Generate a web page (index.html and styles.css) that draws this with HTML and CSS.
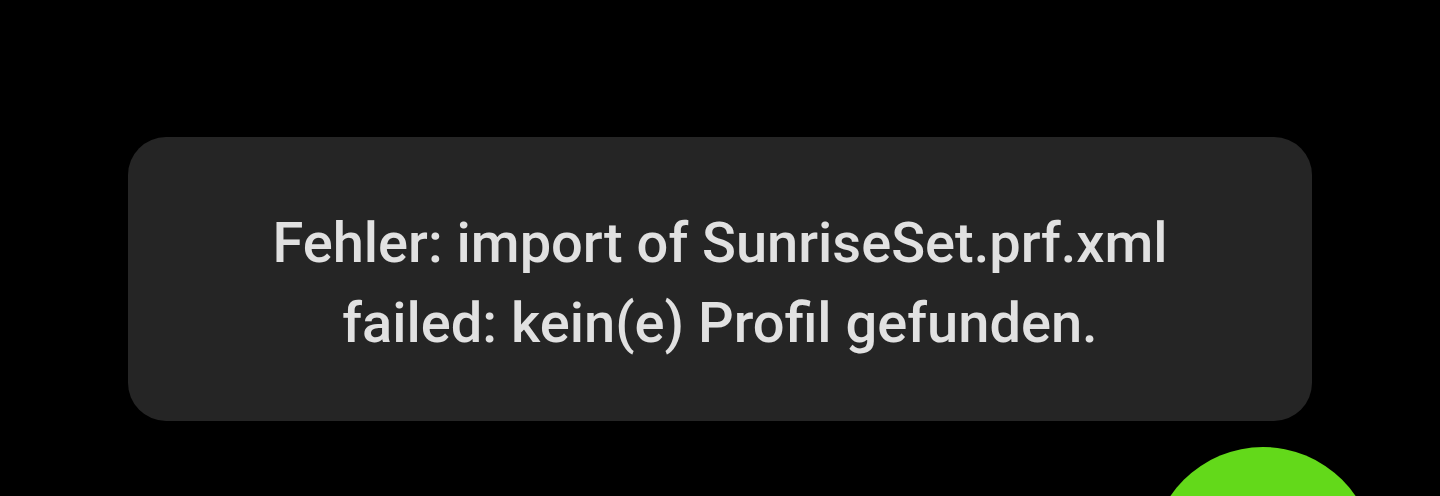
FILE: index.html
```html
<!DOCTYPE html>
<html lang="de">
<head>
<meta charset="utf-8">
<title>Toast</title>
<link rel="stylesheet" href="styles.css">
</head>
<body>
<main class="screen">
  <div class="toast">
    <p class="toast-text">Fehler: import of SunriseSet.prf.xml<br>failed: kein(e) Profil gefunden.</p>
  </div>
  <div class="fab"></div>
</main>
</body>
</html>
```

FILE: styles.css
```css
html, body {
  margin: 0;
  padding: 0;
  background: #000;
}
.screen {
  position: relative;
  width: 1440px;
  height: 496px;
  overflow: hidden;
  padding: 137px 128px 0;
  box-sizing: border-box;
}
.toast {
  background: #252525;
  border-radius: 38px;
  padding: 66px 0 58px;
}
.toast-text {
  margin: 0;
  text-align: center;
  font-family: Roboto, "Noto Sans", sans-serif;
  font-weight: 500;
  font-size: 56px;
  line-height: 80px;
  color: #e1e1e1;
}
.fab {
  position: absolute;
  left: 1151px;
  top: 447px;
  width: 224px;
  height: 224px;
  border-radius: 50%;
  background: #63d91a;
}
```
